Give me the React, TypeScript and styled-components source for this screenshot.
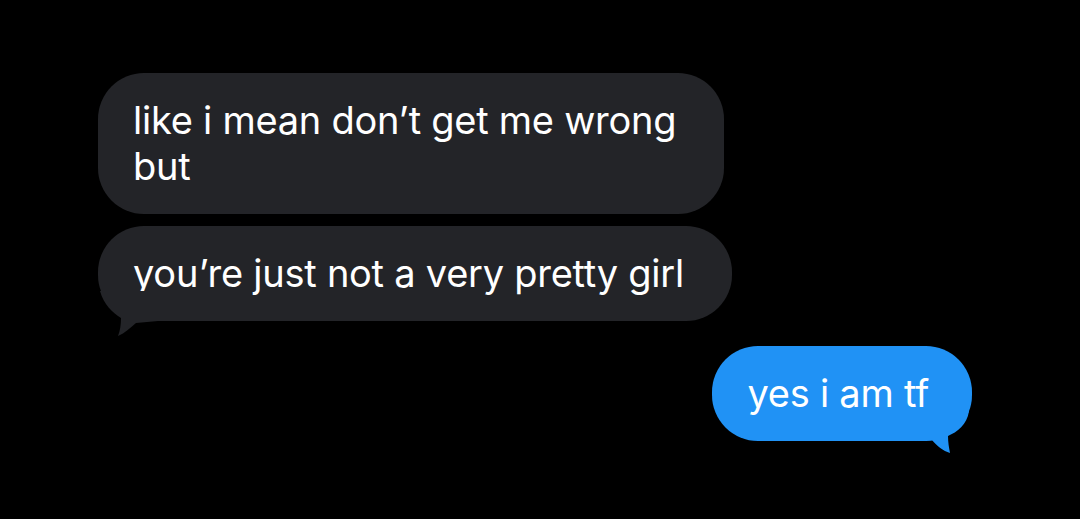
import styled, { createGlobalStyle } from "styled-components";

const GlobalStyle = createGlobalStyle`
  html, body {
    margin: 0;
    padding: 0;
    background: #000;
  }
  body {
    font-family: Inter, "Noto Sans", "Liberation Sans", sans-serif;
    -webkit-font-smoothing: antialiased;
  }
`;

const Thread = styled.div`
  width: 1080px;
  height: 519px;
  box-sizing: border-box;
  padding: 73px 108px 0 98px;
  display: flex;
  flex-direction: column;
  overflow: hidden;
  background: #000;
`;

const Bubble = styled.div<{ $mine?: boolean; $gap?: number }>`
  position: relative;
  align-self: ${(p) => (p.$mine ? "flex-end" : "flex-start")};
  background: ${(p) => (p.$mine ? "#2092f5" : "#232428")};
  color: #fff;
  border-radius: 46px;
  padding: ${(p) => (p.$mine ? "24px 43px 25px 35px" : "24px 48px 25px 35px")};
  font-size: 38px;
  line-height: 46px;
  letter-spacing: -0.25px;
  white-space: nowrap;
  margin-bottom: ${(p) => p.$gap ?? 12}px;
`;

const Tail = styled.svg<{ $mine?: boolean }>`
  position: absolute;
  bottom: -16px;
  width: 60px;
  height: 46px;
  ${(p) => (p.$mine ? "right: 0;" : "left: 0;")}
`;

function GreyTail() {
  return (
    <Tail viewBox="0 0 60 46">
      <path
        d="M2 0 C6 14 14 21 23 27 C23 34 22 40 20 45 C27 42 32 37 38 32 L60 30 L60 0 Z"
        fill="#232428"
      />
    </Tail>
  );
}

function BlueTail() {
  return (
    <Tail $mine viewBox="0 0 60 46">
      <path
        d="M57 0 C55 14 45 21 36 25 C36 31 37 37 38 42 C31 40 25 35 20 29 L0 30 L0 0 Z"
        fill="#2092f5"
      />
    </Tail>
  );
}

export default function App() {
  return (
    <>
      <GlobalStyle />
      <Thread>
        <Bubble>
          like i mean don’t get me wrong
          <br />
          but
        </Bubble>
        <Bubble $gap={25}>
          you’re just not a very pretty girl
          <GreyTail />
        </Bubble>
        <Bubble $mine>
          yes i am tf
          <BlueTail />
        </Bubble>
      </Thread>
    </>
  );
}
